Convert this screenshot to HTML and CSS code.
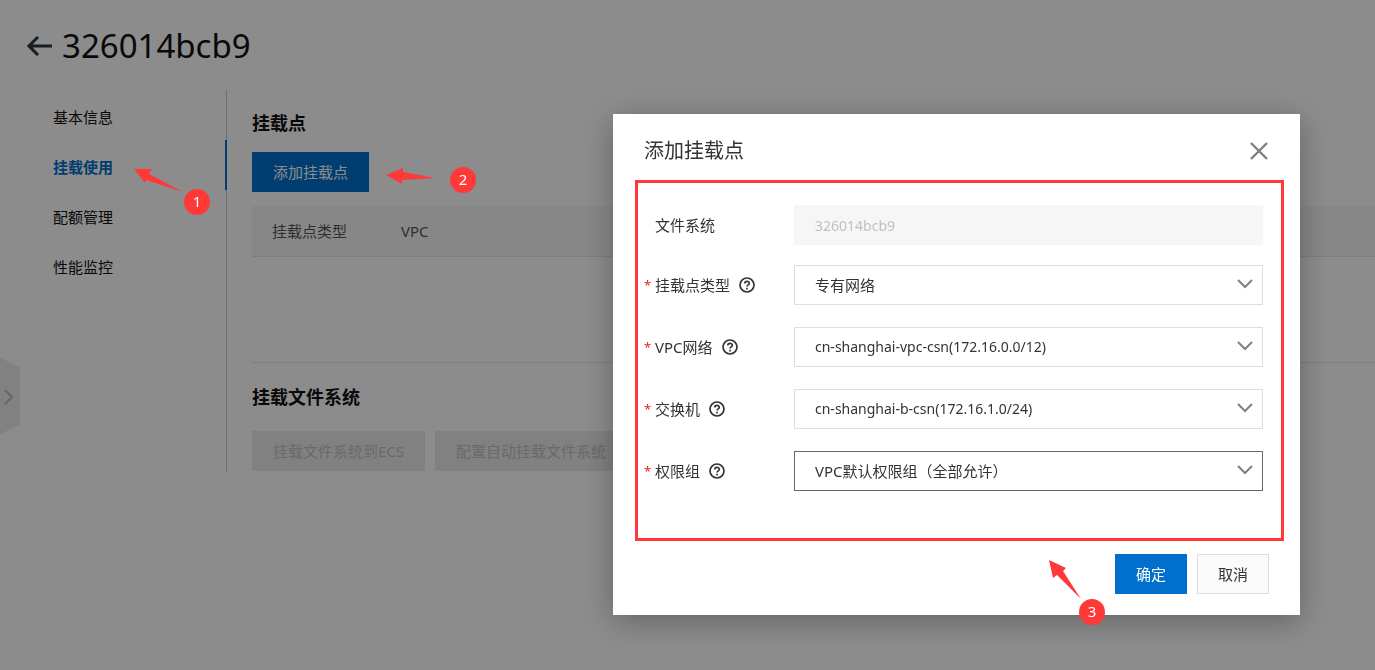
FILE: index.html
```html
<!DOCTYPE html>
<html lang="zh-CN">
<head>
<meta charset="utf-8">
<title>326014bcb9</title>
<link rel="stylesheet" href="styles.css">
</head>
<body>
<div class="page">
  <header class="page-header">
    <a class="back" href="#" aria-label="返回">
      <svg width="26" height="20" viewBox="0 0 26 20" fill="none" stroke="#2b3540" stroke-width="3"><path d="M26 10H3M12 1L3 10l9 9"/></svg>
    </a>
    <h1 class="page-title">326014bcb9</h1>
  </header>
  <div class="layout">
    <nav class="side-nav">
      <a class="nav-item" href="#">基本信息</a>
      <a class="nav-item active" href="#">挂载使用</a>
      <a class="nav-item" href="#">配额管理</a>
      <a class="nav-item" href="#">性能监控</a>
    </nav>
    <main class="content">
      <h2 class="section-title">挂载点</h2>
      <button class="btn primary" type="button">添加挂载点</button>
      <table class="mount-table">
        <thead><tr><th class="col-type">挂载点类型</th><th>VPC</th></tr></thead>
        <tbody><tr><td colspan="2"></td></tr></tbody>
      </table>
      <h2 class="section-title">挂载文件系统</h2>
      <div class="actions">
        <button class="btn" type="button" disabled>挂载文件系统到ECS</button>
        <button class="btn" type="button" disabled>配置自动挂载文件系统</button>
      </div>
    </main>
  </div>
  <button class="drawer" type="button" aria-label="展开">
    <svg width="10" height="16" viewBox="0 0 10 16" fill="none" stroke="#b8b8b8" stroke-width="2"><path d="M1 1l7 7-7 7"/></svg>
  </button>
</div>

<div class="overlay">
  <section class="dialog" role="dialog" aria-labelledby="dialog-title">
    <header class="dialog-header">
      <h2 class="dialog-title" id="dialog-title">添加挂载点</h2>
      <button class="close" type="button" aria-label="关闭">
        <svg width="18" height="18" viewBox="0 0 18 18" fill="none" stroke="#808080" stroke-width="2.4"><path d="M1 1l16 16M17 1L1 17"/></svg>
      </button>
    </header>
    <form class="form">
      <div class="row first">
        <span class="star"></span>
        <label class="label" for="fs">文件系统</label>
        <input class="field latin" id="fs" type="text" value="326014bcb9" disabled>
      </div>
      <div class="row">
        <span class="star">*</span>
        <div class="label"><label for="type">挂载点类型</label><svg class="help" viewBox="0 0 16 16"><circle cx="8" cy="8" r="7"/><path d="M5.8 6.5C5.8 3.6 10.3 3.7 10.3 6.3C10.3 7.9 8 7.8 8 9.6M8 10.7v1.7"/></svg></div>
        <div class="select"><select class="field" id="type"><option>专有网络</option></select><svg class="chevron" viewBox="0 0 16 10"><path d="M1 1l7 7 7-7"/></svg></div>
      </div>
      <div class="row">
        <span class="star">*</span>
        <div class="label"><label for="vpc">VPC网络</label><svg class="help" viewBox="0 0 16 16"><circle cx="8" cy="8" r="7"/><path d="M5.8 6.5C5.8 3.6 10.3 3.7 10.3 6.3C10.3 7.9 8 7.8 8 9.6M8 10.7v1.7"/></svg></div>
        <div class="select"><select class="field latin" id="vpc"><option>cn-shanghai-vpc-csn(172.16.0.0/12)</option></select><svg class="chevron" viewBox="0 0 16 10"><path d="M1 1l7 7 7-7"/></svg></div>
      </div>
      <div class="row">
        <span class="star">*</span>
        <div class="label"><label for="switch">交换机</label><svg class="help" viewBox="0 0 16 16"><circle cx="8" cy="8" r="7"/><path d="M5.8 6.5C5.8 3.6 10.3 3.7 10.3 6.3C10.3 7.9 8 7.8 8 9.6M8 10.7v1.7"/></svg></div>
        <div class="select"><select class="field latin" id="switch"><option>cn-shanghai-b-csn(172.16.1.0/24)</option></select><svg class="chevron" viewBox="0 0 16 10"><path d="M1 1l7 7 7-7"/></svg></div>
      </div>
      <div class="row">
        <span class="star">*</span>
        <div class="label"><label for="group">权限组</label><svg class="help" viewBox="0 0 16 16"><circle cx="8" cy="8" r="7"/><path d="M5.8 6.5C5.8 3.6 10.3 3.7 10.3 6.3C10.3 7.9 8 7.8 8 9.6M8 10.7v1.7"/></svg></div>
        <div class="select"><select class="field current" id="group"><option>VPC默认权限组（全部允许）</option></select><svg class="chevron" viewBox="0 0 16 10"><path d="M1 1l7 7 7-7"/></svg></div>
      </div>
    </form>
    <footer class="dialog-footer">
      <button class="btn primary" type="button">确定</button>
      <button class="btn outline" type="button">取消</button>
    </footer>
    <div class="note note-3">
      <svg width="33" height="40" viewBox="0 0 33 40"><path d="M0 0l17 8-3 3 18 28L8 15l-4 3z"/></svg>
      <span class="badge">3</span>
    </div>
  </section>
</div>

<div class="note note-1">
  <svg width="50" height="24" viewBox="0 0 50 24"><path d="M0 0h18l-3 5 34 18-37-12-1 3z"/></svg>
  <span class="badge">1</span>
</div>
<div class="note note-2">
  <svg width="50" height="17" viewBox="0 0 50 17"><path d="M0 7l17-7v4l32 6-33 2v4z"/></svg>
  <span class="badge">2</span>
</div>
</body>
</html>
```
FILE: styles.css
```css
* { box-sizing: border-box; }

body {
  margin: 0;
  background: #fff;
  color: #111;
  font: 15px/20px "Noto Sans", "Noto Sans CJK SC", sans-serif;
}

button, input, select { font: inherit; border-radius: 0; }
h1, h2 { margin: 0; }
a { color: inherit; text-decoration: none; }
svg { display: block; }

.page { min-height: 100vh; }

.page-header {
  display: flex;
  align-items: center;
  gap: 10px;
  height: 90px;
  padding: 2px 26px 0;
}
.page-title { font-size: 33px; line-height: 48px; font-weight: 400; }

.layout { display: flex; align-items: stretch; }

.side-nav {
  flex: 0 0 227px;
  border-right: 1px solid #c6c6c6;
}
.nav-item {
  display: block;
  height: 50px;
  padding: 17px 0 13px 53px;
}
.nav-item.active {
  margin-right: -1px;
  border-right: 2px solid #0070cc;
  color: #0070cc;
  font-weight: 700;
}

.content { flex: 1; min-width: 0; padding: 20px 0 0 25px; }
.section-title { font-size: 18px; line-height: 26px; font-weight: 700; }

.btn {
  height: 40px;
  padding: 0 20px;
  border: 1px solid transparent;
  background: #fff;
  color: #333;
  white-space: nowrap;
}
.btn.primary { background: #0070cc; color: #fff; }
.btn.outline { background: #fafafa; border-color: #dedede; }
.btn:disabled { background: #ebebeb; color: #c1c1c1; }
.content > .btn { display: block; margin: 16px 0 14px; }

.mount-table { width: 100%; margin-bottom: 21px; border-collapse: collapse; }
.mount-table th {
  height: 50px;
  padding: 0 20px;
  border-bottom: 1px solid #e5e5e5;
  background: #f6f6f6;
  color: #555;
  font-weight: 400;
  text-align: left;
}
.mount-table .col-type { width: 129px; }
.mount-table td { height: 106px; padding: 0; border-bottom: 1px solid #e5e5e5; }

.actions { display: flex; gap: 10px; margin-top: 21px; }

.drawer {
  position: absolute;
  left: 0;
  top: 358px;
  width: 20px;
  height: 76px;
  padding: 2px 0 0 4px;
  border: 0;
  background: #ebebeb;
  clip-path: polygon(0 0, 100% 12%, 100% 88%, 0 100%);
}

.overlay {
  position: fixed;
  inset: 0;
  display: flex;
  justify-content: flex-end;
  align-items: flex-start;
  padding: 114px 75px 0;
  background: rgba(0, 0, 0, .45);
}

.dialog {
  position: relative;
  flex: 0 1 687px;
  padding: 0 16px 21px 22px;
  background: #fff;
  box-shadow: 0 6px 30px rgba(0, 0, 0, .3);
  color: #333;
}
.dialog-header {
  display: flex;
  justify-content: space-between;
  align-items: center;
  height: 66px;
  padding: 8px 16px 0 9px;
}
.dialog-title { font-size: 20px; line-height: 28px; font-weight: 400; }
.close { padding: 0; border: 0; background: none; }

.form {
  padding: 22px 18px 47px 6px;
  border: 3px solid #ff3838;
}
.row {
  display: grid;
  grid-template-columns: 11px 139px 1fr;
  align-items: center;
}
.row + .row { margin-top: 22px; }
.row.first + .row { margin-top: 20px; }
.star { color: #e02b20; font-size: 13px; }
.label { display: flex; align-items: center; gap: 9px; }
.help { width: 16px; height: 16px; fill: none; stroke: #333; stroke-width: 1.7; }

.select { position: relative; }
.field {
  display: block;
  width: 100%;
  height: 40px;
  padding: 0 40px 0 20px;
  border: 1px solid #dedede;
  background: #fff;
  color: #333;
  appearance: none;
}
.field.latin { font-size: 14px; }
.field:disabled { border-color: #f6f6f6; background: #f6f6f6; color: #c1c1c1; }
.field.current { border-color: #666; }
.chevron {
  position: absolute;
  right: 10px;
  top: 14px;
  width: 16px;
  height: 10px;
  fill: none;
  stroke: #808080;
  stroke-width: 2;
  pointer-events: none;
}

.dialog-footer {
  display: flex;
  justify-content: flex-end;
  gap: 10px;
  padding: 13px 15px 0 0;
}

.note { position: absolute; fill: #ff3838; }
.badge {
  position: absolute;
  width: 26px;
  height: 26px;
  border-radius: 50%;
  background: #ff3838;
  color: #fff;
  line-height: 24px;
  text-align: center;
}
.note-1 { left: 134px; top: 169px; }
.note-1 .badge { left: 50px; top: 20px; }
.note-2 { left: 386px; top: 168px; }
.note-2 .badge { left: 64px; top: -1px; }
.note-3 { right: 218px; bottom: 15px; }
.note-3 .badge { left: 30px; top: 39px; }
```
